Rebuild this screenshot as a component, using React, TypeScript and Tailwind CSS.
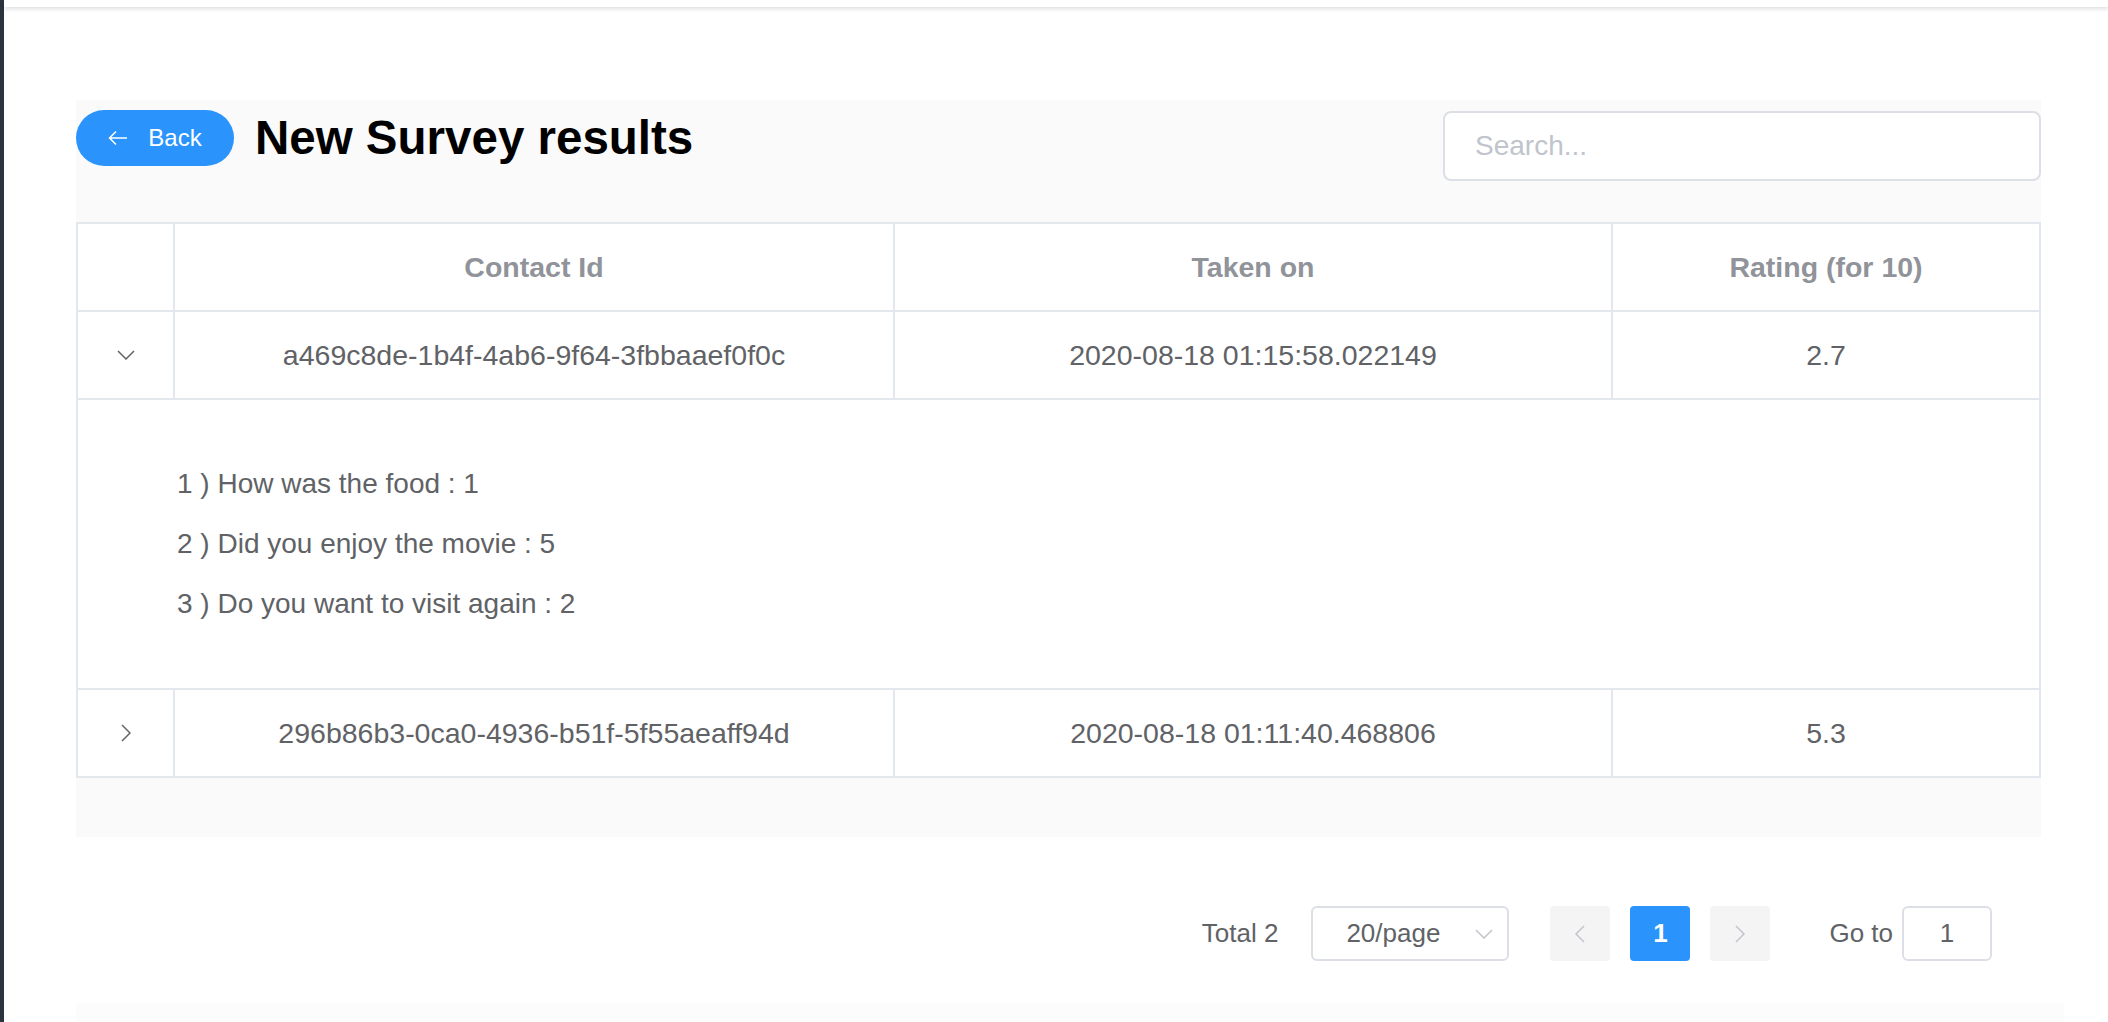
import React from 'react';

type Row = {
  id: string;
  takenOn: string;
  rating: string;
  expanded: boolean;
  answers: string[];
};

const rows: Row[] = [
  {
    id: 'a469c8de-1b4f-4ab6-9f64-3fbbaaef0f0c',
    takenOn: '2020-08-18 01:15:58.022149',
    rating: '2.7',
    expanded: true,
    answers: [
      '1 ) How was the food : 1',
      '2 ) Did you enjoy the movie : 5',
      '3 ) Do you want to visit again : 2',
    ],
  },
  {
    id: '296b86b3-0ca0-4936-b51f-5f55aeaff94d',
    takenOn: '2020-08-18 01:11:40.468806',
    rating: '5.3',
    expanded: false,
    answers: [],
  },
];

const Chevron: React.FC<{ dir: 'down' | 'right' | 'left'; className?: string }> = ({ dir, className }) => {
  if (dir === 'down') {
    return (
      <svg width="18" height="10" viewBox="0 0 18 10" className={className} fill="none">
        <path d="M1 1 L9 9 L17 1" stroke="currentColor" strokeWidth="1.5" />
      </svg>
    );
  }
  const d = dir === 'right' ? 'M1 1 L9 9 L1 17' : 'M9 1 L1 9 L9 17';
  return (
    <svg width="10" height="18" viewBox="0 0 10 18" className={className} fill="none">
      <path d={d} stroke="currentColor" strokeWidth="1.5" />
    </svg>
  );
};

export default function App() {
  return (
    <div className="flex h-screen overflow-hidden bg-white font-['Liberation_Sans',Arial,sans-serif]">
      <div className="w-[4px] shrink-0 bg-[#2b333e]" />
      <div className="flex flex-1 flex-col">
        <div className="h-[7px] shrink-0 bg-white shadow-[0_2px_4px_rgba(0,21,41,0.14)]" />

        <div className="pl-[72px] pr-[67px]">
          {/* panel */}
          <div className="mt-[93px] bg-[#fafafa] pb-[59px]">
            <div className="flex items-start justify-between pt-[10px]">
              <div className="flex items-center">
                <button className="flex h-[56px] w-[158px] items-center justify-center gap-[20px] rounded-full bg-[#2a94fc] text-[24px] text-white">
                  <svg width="20" height="16" viewBox="0 0 20 16" fill="none">
                    <path d="M8 1.5 L1.5 8 L8 14.5 M1.5 8 H19" stroke="white" strokeWidth="1.5" />
                  </svg>
                  <span>Back</span>
                </button>
                <h1 className="ml-[21px] text-[47.5px] font-bold leading-none text-black">New Survey results</h1>
              </div>
              <div className="mt-px flex h-[70px] w-[598px] items-center rounded-[8px] border-2 border-[#dcdfe6] bg-white px-[30px] text-[28px] text-[#c0c4cc]">
                Search...
              </div>
            </div>

            {/* table */}
            <div className="mt-[41px] border-l-2 border-t-2 border-[#e3e8ee] bg-white text-[28.5px] text-[#606266]">
              <div className="grid grid-cols-[97px_720px_718px_1fr] font-bold text-[#909399]">
                <div className="h-[88px] border-b-2 border-r-2 border-[#e3e8ee]" />
                <div className="flex h-[88px] items-center justify-center border-b-2 border-r-2 border-[#e3e8ee]">Contact Id</div>
                <div className="flex h-[88px] items-center justify-center border-b-2 border-r-2 border-[#e3e8ee]">Taken on</div>
                <div className="flex h-[88px] items-center justify-center border-b-2 border-r-2 border-[#e3e8ee]">Rating (for 10)</div>
              </div>

              {rows.map((row) => (
                <div key={row.id}>
                  <div className="grid grid-cols-[97px_720px_718px_1fr]">
                    <div className="flex h-[88px] items-center justify-center border-b-2 border-r-2 border-[#e3e8ee] text-[#606266]">
                      <Chevron dir={row.expanded ? 'down' : 'right'} />
                    </div>
                    <div className="flex h-[88px] items-center justify-center border-b-2 border-r-2 border-[#e3e8ee]">{row.id}</div>
                    <div className="flex h-[88px] items-center justify-center border-b-2 border-r-2 border-[#e3e8ee]">{row.takenOn}</div>
                    <div className="flex h-[88px] items-center justify-center border-b-2 border-r-2 border-[#e3e8ee]">{row.rating}</div>
                  </div>
                  {row.expanded && (
                    <div className="flex h-[290px] flex-col justify-center border-b-2 border-r-2 border-[#e3e8ee] pl-[99px] text-[28px]">
                      {row.answers.map((a) => (
                        <p key={a} className="leading-[60px]">
                          {a}
                        </p>
                      ))}
                    </div>
                  )}
                </div>
              ))}
            </div>
          </div>

          {/* pagination */}
          <div className="mt-[69px] flex items-center justify-end pr-[49px] text-[26px] text-[#606266]">
            <span>Total 2</span>
            <div className="ml-[33px] flex h-[55px] w-[198px] items-center justify-between rounded-[6px] border-2 border-[#dcdfe6] bg-white pl-[33px] pr-[14px]">
              <span>20/page</span>
              <Chevron dir="down" className="text-[#c0c4cc]" />
            </div>
            <button className="ml-[41px] flex h-[55px] w-[60px] items-center justify-center rounded-[4px] bg-[#f4f4f5] text-[#c0c4cc]">
              <Chevron dir="left" />
            </button>
            <button className="ml-[20px] flex h-[55px] w-[60px] items-center justify-center rounded-[4px] bg-[#2a94fc] font-bold text-white">
              1
            </button>
            <button className="ml-[20px] flex h-[55px] w-[60px] items-center justify-center rounded-[4px] bg-[#f4f4f5] text-[#c0c4cc]">
              <Chevron dir="right" />
            </button>
            <span className="ml-[59px]">Go to</span>
            <div className="ml-[9px] flex h-[55px] w-[90px] items-center justify-center rounded-[6px] border-2 border-[#dcdfe6] bg-white">
              1
            </div>
          </div>

          <div className="mr-[-23px] mt-[42px] h-[30px] bg-[#fcfcfc]" />
        </div>
      </div>
    </div>
  );
}
